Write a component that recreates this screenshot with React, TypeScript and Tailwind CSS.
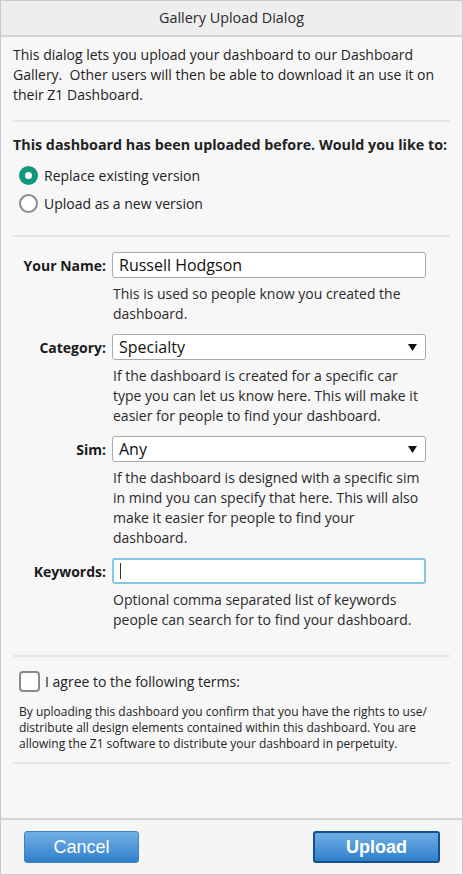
const font = { fontFamily: '"Open Sans", "Noto Sans", sans-serif' };

const Field = ({ label, children, help }: { label: string; children: React.ReactNode; help: string[] }) => (
  <div className="flex flex-col">
    <div className="flex items-center">
      <div className="w-[99px] text-right font-bold text-[14px] text-[#1a1a1a] pr-[6px]">{label}</div>
      {children}
    </div>
    <div className="pl-[100px] mt-[6px] text-[14px] leading-[20px] text-[#2a2a2a]">
      {help.map((l) => (
        <div key={l} className="whitespace-nowrap">{l}</div>
      ))}
    </div>
  </div>
);

const Select = ({ value }: { value: string }) => (
  <div className="w-[314px] h-[26px] bg-white border border-[#a9a9a9] rounded-[3px] flex items-center justify-between pl-[6px] pr-[8px] text-[16px] text-[#111]">
    <span>{value}</span>
    <svg width="9" height="7" viewBox="0 0 9 7"><path d="M0 0h9L4.5 7z" fill="#111" /></svg>
  </div>
);

export default function App() {
  return (
    <div style={font} className="w-[463px] h-[875px] bg-[#f7f7f7] border border-[#c9c9c9] flex flex-col text-[#222]">
      <div className="h-[36px] bg-[#eeeeee] border-b-2 border-[#d4d4d4] flex items-center justify-center text-[14.4px] text-[#2a2a2a]">
        Gallery Upload Dialog
      </div>

      <div className="flex-1 flex flex-col px-[12px]">
        <p className="pt-[8px] pb-[15px] text-[14px] leading-[20px] border-b-2 border-[#e6e6e6]">
          This dialog lets you upload your dashboard to our Dashboard
          <br />
          Gallery.&nbsp; Other users will then be able to download it an use it on
          <br />
          their Z1 Dashboard.
        </p>

        <div className="pt-[13px] pb-[21px] border-b-2 border-[#e6e6e6]">
          <div className="font-bold text-[14.3px] leading-[20px] whitespace-nowrap">This dashboard has been uploaded before. Would you like to:</div>
          <div className="mt-[10px] flex flex-col gap-[7px] pl-[6px] text-[14px]">
            <label className="flex items-center gap-[6px]">
              <span className="w-[19px] h-[19px] rounded-full border-[6px] border-[#12977f] bg-white"></span>
              Replace existing version
            </label>
            <label className="flex items-center gap-[6px]">
              <span className="w-[19px] h-[19px] rounded-full border-2 border-[#8a8a8a] bg-white"></span>
              Upload as a new version
            </label>
          </div>
        </div>

        <div className="pt-[15px] pb-[25px] flex flex-col gap-[10px] border-b-2 border-[#e6e6e6]">
          <Field label="Your Name:" help={["This is used so people know you created the", "dashboard."]}>
            <div className="w-[314px] h-[26px] bg-white border border-[#a9a9a9] rounded-[3px] flex items-center pl-[6px] text-[16px] text-[#111]">
              Russell Hodgson
            </div>
          </Field>
          <Field
            label="Category:"
            help={["If the dashboard is created for a specific car", "type you can let us know here. This will make it", "easier for people to find your dashboard."]}
          >
            <Select value="Specialty" />
          </Field>
          <Field
            label="Sim:"
            help={["If the dashboard is designed with a specific sim", "in mind you can specify that here. This will also", "make it easier for people to find your", "dashboard."]}
          >
            <Select value="Any" />
          </Field>
          <Field label="Keywords:" help={["Optional comma separated list of keywords", "people can search for to find your dashboard."]}>
            <div className="w-[314px] h-[26px] bg-white border-2 border-[#86c6e4] rounded-[3px] flex items-center pl-[6px]">
              <span className="w-px h-[16px] bg-[#333]"></span>
            </div>
          </Field>
        </div>

        <div className="pt-[14px] pb-[10px] border-b-2 border-[#e6e6e6]">
          <label className="flex items-center gap-[5px] pl-[6px] text-[14px]">
            <span className="w-[21px] h-[21px] rounded-[4px] border-2 border-[#8a8a8a] bg-white"></span>
            I agree to the following terms:
          </label>
          <p className="mt-[12px] pl-[6px] text-[12px] leading-[16px] text-[#222] whitespace-nowrap">
            By uploading this dashboard you confirm that you have the rights to use/
            <br />
            distribute all design elements contained within this dashboard. You are
            <br />
            allowing the Z1 software to distribute your dashboard in perpetuity.
          </p>
        </div>
      </div>

      <div className="h-[56px] bg-[#f5f5f5] border-t-2 border-[#d4d4d4] flex items-center justify-between pl-[23px] pr-[22px]" style={{ fontFamily: '"Liberation Sans", Arial, sans-serif' }}>
        <button className="w-[115px] h-[32px] rounded-[3px] border border-[#3f83c6] bg-gradient-to-b from-[#72b0e6] to-[#2f80cc] text-white text-[18px]">
          Cancel
        </button>
        <button className="w-[127px] h-[32px] rounded-[3px] border-2 border-[#164f8c] bg-gradient-to-b from-[#6eaee6] to-[#2f80cc] text-white text-[18px] font-bold">
          Upload
        </button>
      </div>
    </div>
  );
}
